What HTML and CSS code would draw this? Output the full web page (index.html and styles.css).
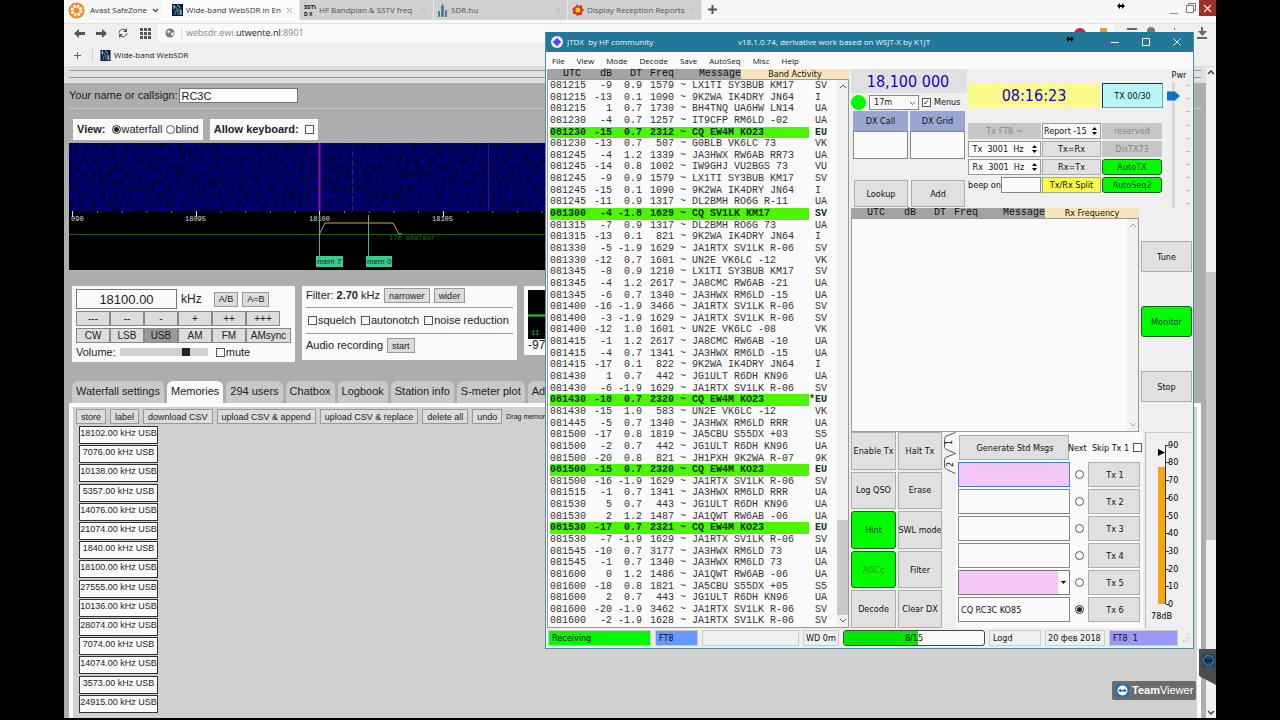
FILE: index.html
```html
<!doctype html>
<html lang="en">
<head>
  <meta charset="utf-8">
  <title>Wide-band WebSDR in Enschede</title>
  <link rel="stylesheet" href="styles.css">
</head>
<body>
  <div class="desktop">

    <!-- Browser window -->
    <div class="browser">
      <header class="tabbar">
        <button class="brand">
          <svg width="17" height="17" viewBox="0 0 17 17"><circle cx="8.500" cy="8.500" r="8" fill="#f08a24"/><circle cx="8.500" cy="8.500" r="5" fill="none" stroke="#fff" stroke-width="2" stroke-dasharray="2.500 1.400"/><circle cx="8.500" cy="8.500" r="3.500" fill="none" stroke="#fff"/></svg>
          Avast SafeZone
          <svg width="7" height="5" viewBox="0 0 7 5"><path d="M1 1l2.500 2.500L6 1" fill="none" stroke="#555" stroke-width="1.500"/></svg>
        </button>
        <div class="tab current">
          <svg width="11" height="12" viewBox="0 0 11 12"><rect width="11" height="12" fill="#0b1350"/><path d="M1 2l4 2v4M3 6v5M6 5v6M8 3v8" stroke="#3fb56a" fill="none"/><path d="M2 1v4M9 6v5M5 1l3 2" stroke="#dde" fill="none"/></svg>
          <span>Wide-band WebSDR in En</span><button aria-label="Close"><svg width="7" height="7"><path d="M1 1l5 5M6 1L1 6" stroke="#aaa"/></svg></button>
        </div>
        <div class="tab">
          <svg width="12" height="14" viewBox="0 0 12 14"><text x="0" y="6" class="fav">SSTV</text><text x="0" y="13" class="fav">D X</text></svg>
          <span>HF Bandplan &amp; SSTV freq</span><button aria-label="Close"><svg width="7" height="7"><path d="M1 1l5 5M6 1L1 6" stroke="#bbb"/></svg></button>
        </div>
        <div class="tab">
          <svg width="10" height="14" viewBox="0 0 10 14"><path d="M3 4l1.500-4L6 4v10H3zM0 8h2v6H0zM7 7h2v7H7z" fill="#3a8fae"/><path d="M4.500 2v11M8 8v5M1 9v4" stroke="#9c4a4a" stroke-width=".6"/></svg>
          <span>SDR.hu</span><button aria-label="Close"><svg width="7" height="7"><path d="M1 1l5 5M6 1L1 6" stroke="#bbb"/></svg></button>
        </div>
        <div class="tab">
          <svg width="12" height="12" viewBox="0 0 12 12"><path d="M5 0l2 2 3-1v3l2 2-2 2v3H7l-2 1-1-2H1V7L0 5l2-1V2l2 1z" fill="#d8341c"/><circle cx="6" cy="6" r="2.500" fill="#ffd42e"/></svg>
          <span>Display Reception Reports</span><button aria-label="Close"><svg width="7" height="7"><path d="M1 1l5 5M6 1L1 6" stroke="#bbb"/></svg></button>
        </div>
        <button class="newtab" aria-label="New tab"><svg width="9" height="9" viewBox="0 0 9 9"><path d="M4.500 0v9M0 4.500h9" stroke="#555" stroke-width="2"/></svg></button>
        <div class="winbtns">
          <button aria-label="Minimize"><svg width="10" height="12"><path d="M1 11.500h8" stroke="#888"/></svg></button>
          <button aria-label="Restore"><svg width="10" height="10"><path d="M.5 2.500h7v7h-7zM2.500 2.500v-2h7v7h-2" fill="none" stroke="#777"/></svg></button>
          <button class="close" aria-label="Close"><svg width="9" height="9"><path d="M1 1l7 7M8 1L1 8" stroke="#eec" stroke-width="1.200"/></svg></button>
        </div>
      </header>

      <div class="toolbar">
        <button aria-label="Back"><svg width="11" height="9"><path d="M0 4.500L5 0v3h6v3H5v3z" fill="#555"/></svg></button>
        <button aria-label="Forward"><svg width="11" height="9"><path d="M11 4.500L6 0v3H0v3h6v3z" fill="#555"/></svg></button>
        <button aria-label="Reload"><svg width="10" height="10"><path d="M1 5a4 4 0 0 1 7-2.500M9 5a4 4 0 0 1-7 2.500" fill="none" stroke="#555"/><path d="M9 0v4H5zM1 10V6h4z" fill="#555"/></svg></button>
        <button aria-label="Speed dial"><svg width="11" height="11"><path d="M0 1.500h11M0 5.500h11M0 9.500h11" stroke="#555" stroke-width="3" stroke-dasharray="3 1"/></svg></button>
        <div class="address">
          <svg width="10" height="10"><circle cx="5" cy="5" r="4.500" fill="#777"/><path d="M2 3l3-1v2L3 6zM6 5l3-1-1 4-2-1z" fill="#eee"/></svg>
          <div class="url">websdr.ewi.<b>utwente.nl</b>:8901</div>
          <svg width="34" height="12"><circle cx="7" cy="7" r="6" fill="#d81f3f"/><rect x="27" y="1" width="7" height="10" fill="#e89a3c"/></svg>
        </div>
        <svg class="tools" width="84" height="14"><path d="M3 3h10M50 3h1M78 1v7M73 12h10" stroke="#666" stroke-width="2"/><circle cx="27" cy="5" r="4" fill="#777"/><path d="M74 5h9l-4.500 5z" fill="#666"/></svg>
      </div>

      <div class="bookmarks">
        <button aria-label="Add bookmark"><svg width="7" height="7"><path d="M3.500 0v7M0 3.500h7" stroke="#666"/></svg></button>
        <a href="#">
          <svg width="11" height="11" viewBox="0 0 11 12"><rect width="11" height="12" fill="#0b1350"/><path d="M1 2l4 2v4M3 6v5M6 5v6M8 3v8" stroke="#3fb56a" fill="none"/><path d="M2 1v4M9 6v5M5 1l3 2" stroke="#dde" fill="none"/></svg>
          Wide-band WebSDR
        </a>
      </div>

      <div class="viewport">
        <main class="page">
          <div class="rules"><hr><hr></div>
          <div class="callsign">
            <label for="callsign">Your name or callsign:</label>
            <input id="callsign" type="text" value="RC3C">
          </div>
          <div class="viewrow">
            <div class="box">
              <b>View:</b>
              <label><input type="radio" name="view" checked>waterfall</label>
              <label><input type="radio" name="view">blind</label>
            </div>
            <div class="box"><label for="keys"><b>Allow keyboard:</b></label><input id="keys" type="checkbox"></div>
          </div>

          <svg class="waterfall" height="127">
            <filter id="noise" x="0" y="0" width="100%" height="100%" color-interpolation-filters="sRGB">
              <feTurbulence type="fractalNoise" baseFrequency=".3 .14" numOctaves="3" seed="4"/>
              <feColorMatrix values="0 0 0 0 0  0 0 0 0 0  .6 0 0 0 .07  0 0 0 0 1"/>
            </filter>
            <rect width="100%" height="127"/>
            <rect width="100%" height="68" filter="url(#noise)"/>
            <path d="M283.500 8v60" stroke="#24247c" stroke-dasharray="6 3"/>
            <path d="M419.500 0v68" stroke="#3c1080"/>
            <path d="M250.500 0v68" stroke="#8a10b8" stroke-width="2"/>
            <path d="M3.500 68v6M127.500 68v6M250.500 68v6M374.500 68v6" stroke="#ddd"/>
            <path d="M28 69h476" stroke="#ddd" stroke-dasharray="1 23.700"/>
            <text class="freq" x="2" y="78">090</text>
            <text class="freq" x="116" y="78">18095</text>
            <text class="freq" x="240" y="78">18100</text>
            <text class="freq" x="363" y="78">18105</text>
            <path d="M0 91.500h1132" stroke="#1d5c1d"/>
            <text class="ham" x="320" y="97">17m amateur</text>
            <path d="M250 92l6-12h68l6 11h3" fill="none" stroke="#b9b04a"/>
            <path d="M250.500 72v42M299.500 72v42" stroke="#5fae86"/>
            <rect x="247" y="113" width="27" height="11" fill="#3fc98a"/><text class="mem" x="248" y="121">mem 7</text>
            <rect x="297" y="113" width="26" height="11" fill="#3fc98a"/><text class="mem" x="298" y="121">mem 0</text>
          </svg>

          <div class="controls">
            <div class="box tuner">
              <div class="row">
                <input class="khz" type="text" value="18100.00" aria-label="Frequency"> <span>kHz</span>
                <button class="btn">A/B</button><button class="btn">A=B</button>
              </div>
              <div class="keys"><button>---</button><button>--</button><button>-</button><button>+</button><button>++</button><button>+++</button></div>
              <div class="keys"><button>CW</button><button>LSB</button><button class="on">USB</button><button>AM</button><button>FM</button><button class="wide">AMsync</button></div>
              <div class="row volume">
                <label for="vol">Volume:</label><input id="vol" type="range" value="78">
                <label><input type="checkbox">mute</label>
              </div>
            </div>
            <div class="box filter">
              <div>Filter: <b>2.70</b> kHz <button class="btn">narrower</button> <button class="btn">wider</button></div>
              <hr>
              <div class="checks"><label><input type="checkbox">squelch</label><label><input type="checkbox">autonotch</label><label><input type="checkbox">noise reduction</label></div>
              <hr>
              <div>Audio recording <button class="btn">start</button></div>
            </div>
            <div class="box smeter">
              <svg width="200" height="49"><rect width="200" height="49"/><path d="M0 25.500h200" stroke="#2c3" stroke-width="2"/><text class="ham lit" x="3" y="45">11</text></svg>
              <div>-97</div>
            </div>
          </div>

          <nav class="tabs">
            <a href="#">Waterfall settings</a><a href="#" class="on">Memories</a><a href="#">294 users</a><a href="#">Chatbox</a><a href="#">Logbook</a><a href="#">Station info</a><a href="#">S-meter plot</a><a href="#">Ad</a>
          </nav>

          <section class="memories">
            <div class="actions">
              <button class="btn">store</button><button class="btn">label</button><button class="btn">download CSV</button><button class="btn">upload CSV &amp; append</button><button class="btn">upload CSV &amp; replace</button><button class="btn">delete all</button><button class="btn">undo</button>
              <small>Drag memor</small>
            </div>
            <ul>
              <li>18102.00 kHz USB</li>
              <li>7076.00 kHz USB</li>
              <li>10138.00 kHz USB</li>
              <li>5357.00 kHz USB</li>
              <li>14076.00 kHz USB</li>
              <li>21074.00 kHz USB</li>
              <li>1840.00 kHz USB</li>
              <li>18100.00 kHz USB</li>
              <li>27555.00 kHz USB</li>
              <li>10136.00 kHz USB</li>
              <li>28074.00 kHz USB</li>
              <li>7074.00 kHz USB</li>
              <li>14074.00 kHz USB</li>
              <li>3573.00 kHz USB</li>
              <li>24915.00 kHz USB</li>
            </ul>
          </section>
        </main>
        <div class="pagescroll">
          <svg width="8" height="5"><path d="M1 4l3-3 3 3" fill="none" stroke="#444" stroke-width="1.500"/></svg>
          <i></i>
          <svg width="8" height="5"><path d="M1 1l3 3 3-3" fill="none" stroke="#444" stroke-width="1.500"/></svg>
        </div>
      </div>
    </div>

    <!-- JTDX window -->
    <div class="jtdx">
      <header class="title">
        <svg width="12" height="12"><circle cx="6" cy="6" r="6" fill="#f2f2ff"/><path d="M6 1l1.500 3.500L11 6 7.500 7.500 6 11 4.500 7.500 1 6l3.500-1.500z" fill="#4a4ae0"/><circle cx="6" cy="6" r="3" fill="#4a4ae0"/></svg>
        <h1>JTDX&nbsp; by HF community</h1>
        <span>v18.1.0.74, derivative work based on WSJT-X by K1JT</span>
        <div class="titlebtns">
          <button aria-label="Minimize"><svg width="8" height="8"><path d="M0 4.500h8" stroke="#fff"/></svg></button>
          <button aria-label="Maximize"><svg width="8" height="8"><path d="M.5.5h7v7h-7z" fill="none" stroke="#fff"/></svg></button>
          <button aria-label="Close"><svg width="8" height="8"><path d="M.5.5l7 7M7.500.5l-7 7" stroke="#fff"/></svg></button>
        </div>
      </header>
      <nav class="menu">
        <button>File</button><button>View</button><button>Mode</button><button>Decode</button><button>Save</button><button>AutoSeq</button><button>Misc</button><button>Help</button>
      </nav>

      <div class="work">
        <section class="pane activity">
          <table class="decodes">
            <thead><tr><th>UTC</th><th>dB</th><th>DT</th><th>Freq</th><th>Message</th><th class="name">Band Activity</th></tr></thead>
            <tbody id="band"></tbody>
          </table>
          <div class="scroll">
            <svg width="8" height="5"><path d="M1 4l3-3 3 3" fill="none" stroke="#555"/></svg>
            <i></i>
            <svg width="8" height="5"><path d="M1 1l3 3 3-3" fill="none" stroke="#555"/></svg>
          </div>
        </section>

        <div class="side">
          <div class="top">
            <div class="dial">
              <output class="vfo">18,100 000</output>
              <div class="band">
                <span class="led"></span>
                <span class="combo"><select aria-label="Band"><option>17m</option></select><svg width="7" height="5"><path d="M1 1l2.500 2.500L6 1" fill="none" stroke="#666"/></svg></span>
                <label><input type="checkbox" checked>Menus</label>
              </div>
              <div class="dx">
                <label for="dxcall">DX Call</label><label for="dxgrid">DX Grid</label>
                <input id="dxcall" type="text"><input id="dxgrid" type="text">
                <button class="key">Lookup</button><button class="key">Add</button>
              </div>
            </div>
            <div class="settings">
              <div class="clock"><time>08:16:23</time><button>TX 00/30</button></div>
              <div class="grid">
                <button class="key off" disabled>Tx FT8 ~</button>
                <span class="spin"><input type="text" value="Report -15" aria-label="Report"><svg width="5" height="10"><path d="M0 4l2.500-3L5 4zM0 6l2.500 3L5 6z"/></svg></span>
                <button class="key off" disabled>reserved</button>
                <span class="spin"><input type="text" value=" Tx  3001  Hz" aria-label="Tx frequency"><svg width="5" height="10"><path d="M0 4l2.500-3L5 4zM0 6l2.500 3L5 6z"/></svg></span>
                <button class="key">Tx=Rx</button>
                <button class="key off" disabled>DisTX73</button>
                <span class="spin"><input type="text" value=" Rx  3001  Hz" aria-label="Rx frequency"><svg width="5" height="10"><path d="M0 4l2.500-3L5 4zM0 6l2.500 3L5 6z"/></svg></span>
                <button class="key">Rx=Tx</button>
                <button class="key green">AutoTX</button>
                <span class="beep"><label for="beep">beep on</label><input id="beep" type="text"></span>
                <button class="key yellow">Tx/Rx Split</button>
                <button class="key green">AutoSeq2</button>
              </div>
            </div>
            <div class="power">
              <span>Pwr</span>
              <svg width="26" height="126"><path d="M7.500 0v126" stroke="#d8d8d8" stroke-width="3"/><path d="M1 9.500h8l5 4.500-5 4.500H1z" fill="#0a74cc"/><path d="M20 3.500h4M20 16.500h4M20 29.500h4M20 43.500h4M20 56.500h4M20 69.500h4M20 82.500h4M20 95.500h4M20 108.500h4M20 121.500h4" stroke="#bbb"/></svg>
            </div>
          </div>

          <div class="middle">
            <section class="pane">
              <table class="decodes">
                <thead><tr><th>UTC</th><th>dB</th><th>DT</th><th>Freq</th><th>Message</th><th class="name">Rx Frequency</th></tr></thead>
                <tbody></tbody>
              </table>
              <div class="scroll empty">
                <svg width="8" height="5"><path d="M1 4l3-3 3 3" fill="none" stroke="#aaa"/></svg>
                <svg width="8" height="5"><path d="M1 1l3 3 3-3" fill="none" stroke="#aaa"/></svg>
              </div>
            </section>
            <div class="run"><button class="key">Tune</button><button class="key green">Monitor</button><button class="key">Stop</button></div>
          </div>

          <div class="bottom">
            <div class="pad">
              <button class="key">Enable Tx</button><button class="key">Halt Tx</button>
              <button class="key">Log QSO</button><button class="key">Erase</button>
              <button class="key green">Hint</button><button class="key">SWL mode</button>
              <button class="key green dim">AGCc</button><button class="key">Filter</button>
              <button class="key">Decode</button><button class="key">Clear DX</button>
            </div>
            <svg class="sidetabs" width="14" height="44"><path d="M13.500.5l-10 4-1 3v8l2 2 9 4-10 4-1 2v8l2 2 9 4" fill="#f8f8f8" stroke="#555"/><text transform="translate(10 13) rotate(-90)">1</text><text transform="translate(11 35) rotate(-90)">2</text></svg>
            <div class="messages">
              <button class="key gen">Generate Std Msgs</button>
              <label class="skip">Next&nbsp; Skip Tx 1<input type="checkbox"></label>
              <input class="pink focus" type="text" aria-label="Message 1"><input type="radio" name="next" aria-label="Next Tx 1"><button class="key">Tx 1</button>
              <input type="text" aria-label="Message 2"><input type="radio" name="next" aria-label="Next Tx 2"><button class="key">Tx 2</button>
              <input type="text" aria-label="Message 3"><input type="radio" name="next" aria-label="Next Tx 3"><button class="key">Tx 3</button>
              <input type="text" aria-label="Message 4"><input type="radio" name="next" aria-label="Next Tx 4"><button class="key">Tx 4</button>
              <span class="combo"><select aria-label="Message 5"><option></option></select><svg width="5" height="3"><path d="M0 0h5L2.500 3z"/></svg></span><input type="radio" name="next" aria-label="Next Tx 5"><button class="key">Tx 5</button>
              <input type="text" value="CQ RC3C KO85" aria-label="Message 6"><input type="radio" name="next" aria-label="Next Tx 6" checked><button class="key">Tx 6</button>
            </div>
            <svg class="meter" width="46" height="196">
              <rect x="12" y="34" width="7" height="137" fill="#f4a70a"/>
              <path d="M19.500 12v159M20 12.500h3M20 29.500h3M20 47.500h3M20 65.500h3M20 83.500h3M20 100.500h3M20 118.500h3M20 136.500h3M20 153.500h3M20 171.500h3" stroke="#333"/>
              <path d="M12 16l7 3.500-7 3.500z"/>
              <text x="22" y="15">90</text><text x="22" y="32">80</text><text x="22" y="50">70</text><text x="22" y="68">60</text><text x="22" y="86">50</text><text x="22" y="103">40</text><text x="22" y="121">30</text><text x="22" y="139">20</text><text x="22" y="156">10</text><text x="22" y="174">0</text>
              <text x="5" y="186">78dB</text>
            </svg>
          </div>
        </div>
      </div>

      <footer class="status">
        <span class="rx">Receiving</span>
        <span class="mode">FT8</span>
        <span class="blank"></span>
        <span class="wd">WD 0m</span>
        <span class="progress"><i style="width: 53%"></i><b>8/15</b></span>
        <span class="logd">Logd</span>
        <span class="date">20 фев 2018</span>
        <span class="count">FT8&nbsp; 1</span>
        <svg width="8" height="8"><path d="M6 1h1M4 4h3M1 7h6" stroke="#aaa" stroke-dasharray="1 1"/></svg>
      </footer>
    </div>

    <svg class="cursor one" width="8" height="6"><path d="M0 3l3-3v2h2V0l3 3-3 3V4H3v2z"/></svg>
    <svg class="cursor two" width="8" height="6"><path d="M0 3l3-3v2h2V0l3 3-3 3V4H3v2z"/></svg>

    <!-- TeamViewer overlay -->
    <div class="tvtab"><svg width="13" height="13"><rect width="13" height="13" fill="#174a66"/><circle cx="6.500" cy="6.500" r="5" fill="none" stroke="#5c8296"/><path d="M2 6.500l3-2v1.500h3V4.500l3 2-3 2V7.500H5v1z" fill="#0a2230"/></svg></div>
    <div class="tvbadge"><svg width="13" height="13"><rect width="13" height="13" rx="1" fill="#1d6fb8"/><circle cx="6.500" cy="6.500" r="5" fill="#fff"/><path d="M2 6.500l3-2v1.500h3V4.500l3 2-3 2V7.500H5v1z" fill="#1d6fb8"/></svg><span><b>Team</b>Viewer</span></div>
  </div>
  <script src="script.js"></script>
</body>
</html>
```

FILE: script.js
```js
// utc, dB, DT, freq, message, country. CQ calls are highlighted.
var decodes = [
  '081215|-9|0.9|1579|LX1TI SY3BUB KM17|SV',
  '081215|-13|0.1|1090|9K2WA IK4DRY JN64|I',
  '081215|1|0.7|1730|BH4TNQ UA6HW LN14|UA',
  '081230|-4|0.7|1257|IT9CFP RM6LD -02|UA',
  '081230|-15|0.7|2312|CQ EW4M KO23|EU',
  '081230|-13|0.7|507|G0BLB VK6LC 73|VK',
  '081245|-4|1.2|1339|JA3HWX RW6AB RR73|UA',
  '081245|-14|0.8|1002|IW9GHJ VU2BGS 73|VU',
  '081245|-9|0.9|1579|LX1TI SY3BUB KM17|SV',
  '081245|-15|0.1|1090|9K2WA IK4DRY JN64|I',
  '081245|-11|0.9|1317|DL2BMH RO6G R-11|UA',
  '081300|-4|-1.8|1629|CQ SV1LK KM17|SV',
  '081315|-7|0.9|1317|DL2BMH RO6G 73|UA',
  '081315|-13|0.1|821|9K2WA IK4DRY JN64|I',
  '081330|-5|-1.9|1629|JA1RTX SV1LK R-06|SV',
  '081330|-12|0.7|1601|UN2E VK6LC -12|VK',
  '081345|-8|0.9|1210|LX1TI SY3BUB KM17|SV',
  '081345|-4|1.2|2617|JA8CMC RW6AB -21|UA',
  '081345|-6|0.7|1340|JA3HWX RM6LD -15|UA',
  '081400|-16|-1.9|3466|JA1RTX SV1LK R-06|SV',
  '081400|-3|-1.9|1629|JA1RTX SV1LK R-06|SV',
  '081400|-12|1.0|1601|UN2E VK6LC -08|VK',
  '081415|-1|1.2|2617|JA8CMC RW6AB -10|UA',
  '081415|-4|0.7|1341|JA3HWX RM6LD -15|UA',
  '081415|-17|0.1|822|9K2WA IK4DRY JN64|I',
  '081430|1|0.7|442|JG1ULT R6DH KN96|UA',
  '081430|-6|-1.9|1629|JA1RTX SV1LK R-06|SV',
  '081430|-18|0.7|2320|CQ EW4M KO23|*EU',
  '081430|-15|1.0|583|UN2E VK6LC -12|VK',
  '081445|-5|0.7|1340|JA3HWX RM6LD RRR|UA',
  '081500|-17|0.8|1819|JA5CBU S55DX +03|S5',
  '081500|-2|0.7|442|JG1ULT R6DH KN96|UA',
  '081500|-20|0.8|821|JH1PXH 9K2WA R-07|9K',
  '081500|-15|0.7|2320|CQ EW4M KO23|EU',
  '081500|-16|-1.9|1629|JA1RTX SV1LK R-06|SV',
  '081515|-1|0.7|1341|JA3HWX RM6LD RRR|UA',
  '081530|5|0.7|443|JG1ULT R6DH KN96|UA',
  '081530|2|1.2|1487|JA1QWT RW6AB -06|UA',
  '081530|-17|0.7|2321|CQ EW4M KO23|EU',
  '081530|-7|-1.9|1629|JA1RTX SV1LK R-06|SV',
  '081545|-10|0.7|3177|JA3HWX RM6LD 73|UA',
  '081545|-1|0.7|1340|JA3HWX RM6LD 73|UA',
  '081600|0|1.2|1486|JA1QWT RW6AB -06|UA',
  '081600|-18|0.8|1821|JA5CBU S55DX +05|S5',
  '081600|2|0.7|443|JG1ULT R6DH KN96|UA',
  '081600|-20|-1.9|3462|JA1RTX SV1LK R-06|SV',
  '081600|-2|-1.9|1628|JA1RTX SV1LK R-06|SV'
];

var band = document.getElementById('band');

decodes.forEach(function(line) {
  var cells = line.split('|');
  var row = document.createElement('tr');
  if (cells[4].indexOf('CQ ') === 0) row.className = 'cq';
  if (cells[5][0] !== '*') cells[5] = ' ' + cells[5];
  cells.splice(4, 0, '~');
  cells.forEach(function(text) {
    row.insertCell().textContent = text;
  });
  band.appendChild(row);
});
```

FILE: styles.css
```css
* {
  box-sizing: border-box;
  margin: 0;
  padding: 0;
}

html, body { height: 100% }

body {
  background: #000;
  color: #222;
  font: 11px/13px "Liberation Sans", Arial, sans-serif;
  overflow: hidden;
}

button, input, select {
  font: inherit;
  color: inherit;
  border: 0;
  border-radius: 0;
  background: transparent;
}

button { white-space: nowrap }

svg { flex: none; display: block }

button svg { margin: auto }

a { color: inherit; text-decoration: none }

input[type="checkbox"],
input[type="radio"] {
  appearance: none;
  flex: none;
  width: 9px;
  height: 9px;
  border: 1px solid #555;
  background: #fff;
}

input[type="radio"] { border-radius: 50% }

input[type="radio"]:checked {
  background: #222;
  box-shadow: inset 0 0 0 1px #fff;
}

input[type="checkbox"]:checked::before {
  content: "✓";
  display: block;
  font: 8px/7px "DejaVu Sans", sans-serif;
}

.desktop {
  position: relative;
  height: calc(100vh - 2px);
  margin: 0 5%;
}

/* browser chrome */

.browser {
  display: flex;
  flex-direction: column;
  height: 100%;
  background: #efefef;
  overflow: hidden;
}

.tabbar {
  display: flex;
  height: 24px;
  align-items: flex-start;
  background: #f7f7f7;
  border-bottom: 1px solid #e2e2e2;
  font: 8px/12px "Open Sans", sans-serif;
  color: #333;
}

.brand {
  display: flex;
  align-items: center;
  gap: 5px;
  width: 98px;
  height: 20px;
  padding-left: 4px;
}

.brand svg { margin: 0 }

.tab {
  display: flex;
  align-items: center;
  gap: 3px;
  width: 134px;
  height: 20px;
  padding: 0 6px 0 4px;
  background: #d0d0d0;
  border-right: 1px solid #e6e6e6;
  color: #555;
}

.tab.current {
  width: 138px;
  padding-left: 10px;
  background: #fbfbfb;
  color: #333;
}

.tab span {
  flex: 1;
  white-space: nowrap;
}

.fav { font: bold 5px "Liberation Sans", sans-serif }

.newtab { padding: 5px 6px }

.winbtns { display: flex; margin-left: auto }

.winbtns button {
  display: flex;
  align-items: center;
  justify-content: center;
  width: 17px;
  height: 16px;
}

.winbtns .close { background: #9c2f2a }

.toolbar {
  display: flex;
  align-items: center;
  height: 18px;
  padding-left: 4px;
}

.toolbar button { width: 22px }

.address {
  display: flex;
  flex: 1;
  align-items: center;
  gap: 6px;
  height: 18px;
  margin-left: 2px;
  padding: 0 7px 0 7px;
  background: #fafafa;
  border-radius: 2px;
}

.url {
  flex: 1;
  padding-left: 4px;
  border-left: 1px solid #ddd;
  font: 9px/12px "Open Sans", sans-serif;
  color: #888;
}

.url b { font-weight: 400; color: #222 }

.tools { margin: 0 8px 0 10px }

.bookmarks {
  display: flex;
  align-items: center;
  height: 25px;
  padding: 2px 10px 0;
  border-bottom: 1px solid #ddd;
  font: 8px/12px "Open Sans", sans-serif;
}

.bookmarks a {
  display: flex;
  align-items: center;
  gap: 3px;
  margin-left: 11px;
  padding-left: 7px;
  border-left: 1px solid #ccc;
}

.viewport { display: flex; flex: 1; min-height: 0 }

.pagescroll {
  display: flex;
  flex-direction: column;
  align-items: center;
  justify-content: space-between;
  width: 10px;
  padding: 3px 0;
  background: #f0f0f0;
}

.pagescroll i {
  width: 10px;
  height: 268px;
  margin: 197px 0 auto;
  background: #c8c8c8;
}

/* WebSDR page */

.page {
  display: flex;
  flex: 1;
  flex-direction: column;
  min-width: 0;
  padding: 0 5px;
  background: #adadad;
}

.rules {
  height: 16px;
  margin: 0 -5px;
  padding: 3px 5px;
  background: #e0e0e0;
}

hr { border: 0; border-top: 1px solid #999 }

.rules hr + hr { margin-top: 6px }

.callsign {
  display: flex;
  align-items: center;
  gap: 2px;
  height: 26px;
  border-bottom: 1px solid #c8c8c8;
}

.callsign input {
  width: 119px;
  height: 15px;
  padding: 0 1px;
  background: #fafafa;
  border: 1px solid #777;
}

.box { background: #fafafa; color: #222 }

.box label { display: inline-flex; align-items: center; gap: 1px }

.viewrow { display: flex; gap: 7px; padding: 10px 4px 3px }

.viewrow .box {
  display: flex;
  align-items: center;
  gap: 6px;
  height: 21px;
  padding: 0 4px;
}

.viewrow .box label + label { margin-left: -3px }

.waterfall {
  flex: none;
  width: calc(100% - 12px);
  overflow: hidden;
}

.freq { font: 7px "Liberation Mono", monospace; fill: #ddd }

.ham { font: 7px "Liberation Mono", monospace; fill: #1f6a1f }

.ham.lit { fill: #3c4 }

.mem { font: 8px "Liberation Sans", sans-serif; fill: #033 }

.controls {
  display: flex;
  align-items: flex-start;
  gap: 7px;
  height: 95px;
  padding: 16px 3px 0;
}

.btn {
  height: 15px;
  padding: 0 4px;
  border: 1px solid #999;
  background: #dcdcdc;
  font-size: 9px;
  line-height: 12px;
}

.tuner { width: 223px; height: 76px; padding: 3px 4px }

.row { display: flex; align-items: center; gap: 4px }

.row span { font-size: 12px }

.khz {
  width: 101px;
  height: 20px;
  border: 1px solid #777;
  font-size: 13px;
  text-align: center;
}

.row .btn:first-of-type { margin-left: 8px }

.keys { display: flex; margin-top: 2px }

.keys button {
  width: 34px;
  height: 15px;
  border: 1px solid #888;
  background: #dcdcdc;
  font-size: 10px;
  line-height: 12px;
}

.keys .on { background: #999 }

.keys .wide { width: 45px }

.volume { height: 18px; gap: 4px }

.volume input[type="range"] {
  appearance: none;
  width: 88px;
  height: 8px;
  margin-right: 4px;
  background: #cfcfcf;
}

input[type="range"]::-webkit-slider-thumb {
  appearance: none;
  width: 8px;
  height: 8px;
  background: #222;
}

.filter { width: 215px; height: 74px; padding: 2px 4px }

.filter .btn { margin-left: 1px }

.filter hr { margin: 4px 0 }

.filter hr + div { min-height: 17px }

.filter .checks { display: flex; gap: 5px; padding-left: 2px; white-space: nowrap }

.smeter { height: 69px; padding: 4px; font-size: 12px }

.tabs { display: flex; gap: 3px; height: 22px; margin-top: 16px; padding: 0 3px }

.tabs a {
  padding: 4px 4px 0;
  border-radius: 6px 6px 0 0;
  background: #c9c9c9;
  white-space: nowrap;
}

.tabs .on { background: #fafafa }

.memories {
  display: flex;
  flex: 1;
  flex-direction: column;
  min-height: 0;
  padding: 2px 3px 5px;
  border: 4px solid #fafafa;
  border-bottom: 0;
  background: #d0d0d0;
}

.actions { display: flex; align-items: center; gap: 4px }

.actions small { font-size: 7px; white-space: nowrap }

.memories ul {
  display: flex;
  flex: 1;
  flex-direction: column;
  justify-content: space-between;
  width: 79px;
  margin: 2px 0 0 3px;
  list-style: none;
}

.memories li {
  height: 18px;
  border: 1px solid #333;
  background: #fafafa;
  font-size: 9px;
  text-align: center;
  white-space: nowrap;
}

/* JTDX */

.jtdx {
  position: absolute;
  top: 32px;
  left: 481px;
  display: flex;
  flex-direction: column;
  width: 649px;
  height: 617px;
  border: 1px solid #4f8ea6;
  border-top: 0;
  background: #efefef;
  color: #111;
  font: 9px/12px "DejaVu Sans Condensed", "DejaVu Sans", sans-serif;
}

.title {
  display: flex;
  align-items: center;
  height: 20px;
  padding-left: 5px;
  background: #227898;
  color: #f4f4f4;
  font: 8px/12px "Open Sans", sans-serif;
}

.title h1 {
  width: 175px;
  padding-left: 4px;
  font: inherit;
}

.titlebtns {
  display: flex;
  gap: 23px;
  margin-left: auto;
  padding-right: 12px;
}

.menu {
  display: flex;
  gap: 12px;
  height: 17px;
  padding-left: 6px;
  background: #fafafa;
  font: 8px/12px "Open Sans", sans-serif;
}

.work {
  display: flex;
  flex: 1;
  gap: 2px;
  min-height: 0;
  padding-left: 1px;
}

.pane {
  position: relative;
  display: flex;
  flex-direction: column;
}

.activity { flex: none; width: 302px }

.decodes {
  display: flex;
  flex: 1;
  flex-direction: column;
  font: 10px/11px "Liberation Mono", monospace;
  white-space: pre;
}

.decodes tr { display: grid }

.decodes thead tr { grid-template-columns: 41px 24px 30px 32px 67px 1fr }

.decodes th {
  height: 10px;
  background: #a3a3a3;
  font-weight: 400;
  line-height: 10px;
  text-align: right;
}

.decodes th:first-child { padding-right: 7px }

.decodes .name {
  background: #f7e4bc;
  font: 9px/10px "DejaVu Sans Condensed", sans-serif;
  text-align: center;
}

.decodes tbody {
  display: flex;
  flex: 1;
  flex-direction: column;
  padding-left: 2px;
  border: 1px solid #999;
  background: #fafafa;
}

.decodes tbody tr {
  flex: 1;
  grid-template-columns: 38px 24px 30px 32px 18px 117px 1fr;
  min-height: 0;
}

.decodes td { text-align: right; color: #333 }

.decodes td:first-child,
.decodes td:nth-child(n+6) { text-align: left }

.decodes td:nth-child(5) { text-align: center }

.decodes .cq td { background: #4cf500; font-weight: 700; color: #132 }

.decodes .cq td:last-child { background: none }

.scroll {
  position: absolute;
  top: 11px;
  right: 1px;
  bottom: 1px;
  display: flex;
  flex-direction: column;
  align-items: center;
  justify-content: space-between;
  width: 11px;
  padding: 4px 0;
  background: #f0f0f0;
}

.scroll i {
  width: 11px;
  height: 95px;
  margin: auto 0 3px;
  background: #c9c9c9;
}

.side {
  display: flex;
  flex: 1;
  flex-direction: column;
  min-width: 0;
}

.key {
  overflow: hidden;
  border: 1px solid #adadad;
  background: #e0e0e0;
  line-height: 12px;
}

.key.off { background: #c6c6c6; border-color: #c6c6c6; color: #888 }

.key.green {
  border-color: #186018;
  border-radius: 3px;
  background: #00fa00;
  color: #043;
}

.key.dim { color: #2b9a2b }

.key.yellow { background: #fafa50; border-color: #aa8 }

.jtdx input[type="text"],
.combo select {
  min-width: 0;
  border: 1px solid #888;
  background: #fafafa;
}

.top { display: flex; height: 139px }

.dial { width: 116px }

.vfo {
  display: block;
  height: 24px;
  padding-right: 2px;
  background: #e0e0e0;
  color: #1400d0;
  font-size: 16px;
  line-height: 25px;
  text-align: center;
}

.band { display: flex; align-items: center; gap: 3px; height: 18px }

.led {
  width: 15px;
  height: 15px;
  border-radius: 50%;
  background: #00fa00;
}

.combo { position: relative; display: flex }

.combo select {
  appearance: none;
  width: 50px;
  height: 15px;
  padding-left: 4px;
}

.combo svg {
  position: absolute;
  top: 6px;
  right: 3px;
  pointer-events: none;
}

.band label { display: flex; align-items: center; gap: 3px }

.dx {
  display: grid;
  grid-template-columns: 55px 55px;
  grid-template-rows: 20px 28px 26px;
  column-gap: 2px;
  padding-left: 2px;
}

.dx label {
  background: #9aa6d2;
  line-height: 20px;
  text-align: center;
}

.dx .key { height: 27px; margin: 21px 0 0 1px }

.settings { width: 196px; padding: 14px 0 0 1px }

.clock { display: flex; gap: 2px; height: 25px }

.clock time {
  flex: 1;
  background: #fafa8a;
  color: #1400d0;
  font-size: 16px;
  line-height: 26px;
  text-align: center;
}

.clock button {
  width: 61px;
  border: 1px solid #6aa;
  border-top-color: #333;
  border-left-color: #333;
  background: #b8f5f5;
}

.grid {
  display: grid;
  grid-template-columns: 73px 59px 60px;
  grid-auto-rows: 16px;
  gap: 2px 1px;
  margin-top: 15px;
}

.spin {
  display: flex;
  align-items: center;
  padding-right: 3px;
  border: 1px solid #999;
  background: #fafafa;
}

.jtdx .spin input {
  flex: 1;
  width: 0;
  padding-left: 1px;
  border: 0;
}

.beep { display: flex; white-space: nowrap }

.beep label { line-height: 16px }

.beep input { flex: 1; width: 0 }

.power { padding: 0 0 0 3px; text-align: center }

.power span { display: block; height: 13px }

.middle { display: flex; flex: none; height: 224px }

.middle .pane { width: 288px }

.run {
  display: flex;
  flex: 1;
  flex-direction: column;
  gap: 34px;
  padding: 33px 1px 0 2px;
}

.run .key { height: 31px }

.bottom { display: flex; flex: 1; min-height: 0 }

.pad {
  display: grid;
  grid-template-columns: 45px 44px;
  grid-auto-rows: 1fr;
  gap: 2px;
  width: 91px;
}

.pad .key {
  display: flex;
  align-items: center;
  justify-content: center;
  min-width: 0;
}

.sidetabs { font-size: 9px }

.messages {
  display: grid;
  grid-template-columns: 112px 18px 52px;
  grid-auto-rows: 25px;
  gap: 2px 0;
  align-items: center;
  justify-items: center;
  padding: 3px 3px 2px 2px;
  background: #fafafa;
}

.messages input[type="text"],
.messages .key,
.messages .combo { width: 100%; height: 25px; padding-left: 2px }

.messages .gen { width: 110px }

.skip {
  display: flex;
  grid-column: 2 / 4;
  align-items: center;
  gap: 4px;
  white-space: nowrap;
}

.jtdx .messages .pink { background: #f5c6f5 }

.messages .combo { padding: 0; border: 1px solid #777 }

.messages .combo select {
  width: 100%;
  height: 23px;
  border: solid #fafafa;
  border-width: 0 11px 0 0;
  background: #f5c6f5;
}

.messages .combo svg { top: 10px }

.jtdx .messages .focus { border-color: #3b82d0 }

.meter {
  margin-left: 2px;
  border-left: 1px solid #bbb;
  border-top: 1px solid #ccc;
}

.status {
  display: flex;
  align-items: center;
  gap: 4px;
  height: 20px;
  padding: 0 3px 0 2px;
  line-height: 14px;
}

.status span {
  height: 16px;
  padding-left: 3px;
  border: 1px solid #ccc;
  white-space: nowrap;
}

.status .rx { width: 103px; background: #00fa00 }

.status .mode { width: 43px; background: #6699ff }

.status .blank { width: 97px }

.status .wd { width: 36px; padding-left: 2px }

.status .progress {
  position: relative;
  flex: 1;
  padding: 0;
  border: 1px solid #444;
  border-radius: 3px;
  background: #fafafa;
  text-align: center;
}

.progress i { display: block; height: 14px; background: #00e800 }

.progress b { position: absolute; inset: 0; font-weight: 400 }

.status .logd { width: 52px }

.status .date { width: 60px; padding-left: 2px }

.status .count { width: 69px; background: #9999f5 }

/* things floating over the desktop */

.cursor { position: absolute }

.cursor.one { top: 3px; left: 1053px }

.cursor.two { top: 36px; left: 1002px }

.tvtab {
  position: absolute;
  top: 649px;
  right: 0;
  width: 17px;
  height: 36px;
  padding: 5px 3px;
  background: #4c4c4c;
  clip-path: polygon(0 0, 100% 0, 100% 100%, 0 75%);
}

.tvbadge {
  position: absolute;
  top: 681px;
  right: 20px;
  display: flex;
  align-items: center;
  gap: 3px;
  width: 84px;
  height: 19px;
  padding-left: 4px;
  border-radius: 2px;
  background: #6c6c6c;
  color: #fff;
}
```
